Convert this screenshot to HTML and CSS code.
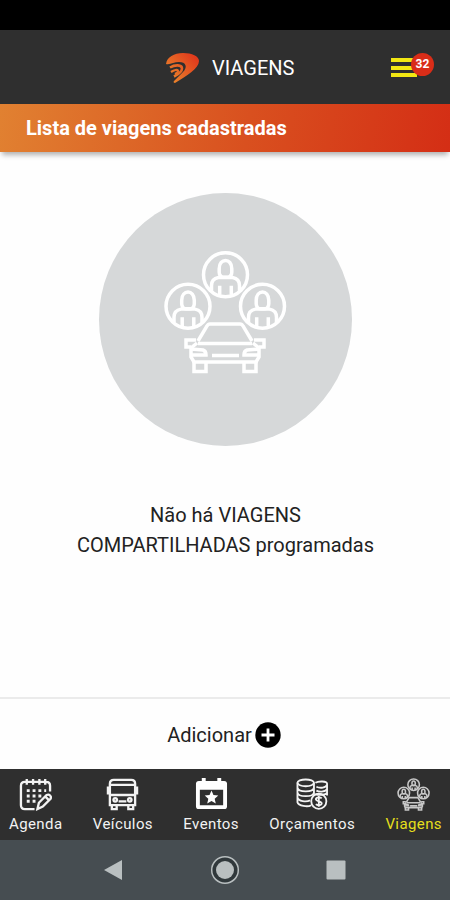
FILE: index.html
```html
<!DOCTYPE html>
<html lang="pt-BR">
	<head>
		<meta charset="utf-8" />
		<title>Viagens</title>
		<link rel="stylesheet" href="styles.css">
	</head>

	<body>
		<svg width="0" height="0" class="defs">
			<defs>
				<linearGradient id="logo-color" gradientUnits="userSpaceOnUse" x1="2" y1="28" x2="32" y2="2">
					<stop offset="0" stop-color="#ea8a2c" />
					<stop offset="1" stop-color="#e0331b" />
				</linearGradient>
				<g id="person">
					<circle r="22" />
					<path d="M-6.3 -6c0-11 12.600-11 12.600 0v3.500c0 2.500-1.800 5-4 5h-4.600c-2.200 0-4-2.500-4-5z" />
					<path d="M-14 16V11c0-5 3-7.500 7-8.200h14c4 .7 7 3.200 7 8.200v5M-5.800 11v9M5.800 11v9" />
				</g>
				<g id="carpool">
					<use href="#person" x="70.500" y="29.700" />
					<use href="#person" x="33" y="61.300" />
					<use href="#person" x="107.500" y="61.300" />
					<path d="M43 96l9-15q1-2 3-2h30q2 0 3 2l9 15" />
					<path d="M43 98.500h54M42 98l-6 5v9l3 5h62l3-5v-9l-6-5" />
					<path d="M41 95H31v7h5M99 95h10v7h-5M36 104l12 1q3 1 3 5H37M104 104l-12 1q-3 1-3 5h14" />
					<path d="M57 110.500h27M39 117v9.500h12V118M101 117v9.500H89V118" />
				</g>
			</defs>
		</svg>

		<div class="status"></div>

		<header class="header">
			<svg class="logo" viewBox="0 0 36 32">
				<path fill="url(#logo-color)" d="M1 12C2 5 9 1 18 1c9 0 16 3 16 8 0 7-12 15-24 22-1 0-2-1-1-2l9-9c5-5 3-10-4-10-5 0-9 3-13 2z" />
				<path fill="none" stroke="url(#logo-color)" stroke-width="2.600" d="M5 15.500c5-3 12-3 12 1 0 3-4 6-8 8" />
				<path fill="none" stroke="url(#logo-color)" stroke-width="2.200" d="M6 20c3-2 7-3 7-1 0 1.500-1 2-3 3" />
			</svg>
			<h1>VIAGENS</h1>
			<div class="menu">
				<i></i>
				<i></i>
				<i></i>
				<span class="badge">32</span>
			</div>
		</header>

		<div class="banner">Lista de viagens cadastradas</div>

		<main class="content">
			<div class="circle">
				<svg class="carpool" viewBox="0 0 140 135"><use href="#carpool" /></svg>
			</div>
			<p>Não há VIAGENS<br>COMPARTILHADAS programadas</p>
		</main>

		<div class="add">
			<span>Adicionar</span>
			<svg viewBox="0 0 26 26">
				<circle cx="13" cy="13" r="12.700" />
				<path d="M13 6.500v13M6.500 13h13" stroke="#fff" stroke-width="2.800" />
			</svg>
		</div>

		<nav class="tabs">
			<a class="agenda">
				<svg viewBox="0 0 34 34">
					<path d="M16 32H6q-4 0-4-4V8q0-4 4-4h22q4 0 4 4v6M8 1v6M14.500 1v6M21 1v6M27 1v6" />
					<path class="dots" d="M8 13h20M8 18.500h17M8 24h12" />
					<path d="M19 32l1.500-6.500 8-8q2-1 3.500.5t.5 3.500l-8 8zM27 19l4 4" />
				</svg>
				<span>Agenda</span>
			</a>
			<a class="veiculos">
				<svg viewBox="0 0 34 34">
					<path d="M4 28V6q0-4 4-4h18q4 0 4 4v22zM4 7h26M4 17.500h26M4 10H2v7M30 10h2v7M6 28v4h5v-4M23 28v4h5v-4M13 24h8" />
					<circle cx="9.500" cy="22.500" r="1.800" />
					<circle cx="24.500" cy="22.500" r="1.800" />
				</svg>
				<span>Veículos</span>
			</a>
			<a class="eventos">
				<svg viewBox="0 0 34 34">
					<path class="fill" fill-rule="evenodd" d="M4 3h3V0h4v3h12V0h4v3h3q3 0 3 3v23q0 3-3 3H4q-3 0-3-3V6q0-3 3-3zM5 12v16h24V12z" />
					<path class="fill" d="M17 13l2 4.600 5 .5-3.700 3.300 1.100 4.900-4.400-2.600-4.400 2.600 1.100-4.900L10 18.100l5-.5z" />
				</svg>
				<span>Eventos</span>
			</a>
			<a class="orcamentos">
				<svg viewBox="0 0 34 34">
					<ellipse cx="10" cy="5" rx="8.500" ry="3.500" />
					<path d="M1.500 5v20c1 4 11 5 14 3M18.500 5v12M1.500 10c1 5 16 5 17 0M1.500 15c1 5 16 5 17 0M1.500 20c1 4 9 5 13 3" />
					<path d="M20 5c3-2 12-2 12 1v12M21 9c4 2 10 1 11-2M21 13c4 2 10 1 11-2M21 17c4 1 10 0 11-2" />
					<circle cx="23.500" cy="24" r="7.800" />
					<path d="M26.500 21c-2-2-6-1-6 1s6 2 6 4-4 3-6 1M23.500 18.500v11" />
				</svg>
				<span>Orçamentos</span>
			</a>
			<a class="viagens active">
				<svg viewBox="7 4 126 126"><use href="#carpool" /></svg>
				<span>Viagens</span>
			</a>
		</nav>

		<div class="android">
			<svg viewBox="0 0 30 30"><path d="M5 15L23 5v20z" /></svg>
			<svg viewBox="0 0 30 30">
				<circle class="ring" cx="15" cy="15" r="13.300" />
				<circle cx="15" cy="15" r="9" />
			</svg>
			<svg viewBox="0 0 30 30"><rect x="5.500" y="5.500" width="19" height="19" rx="1" /></svg>
		</div>
	</body>

</html>
```
FILE: styles.css
```css
body,
h1,
p {
	margin: 0;
	padding: 0;
}

body {
	display: flex;
	flex-direction: column;
	height: 900px;
	overflow: hidden;
	background: #fefefe;
	color: #222;
	font-family: Roboto, "Liberation Sans", sans-serif;
}

svg {
	display: block;
}

.defs {
	position: absolute;
}

.status {
	height: 30px;
	background: #000;
}

.header {
	display: flex;
	align-items: center;
	height: 74px;
	padding: 1px 16px 0 165px;
	box-sizing: border-box;
	background: #2f2f2f;
}

.logo {
	width: 36px;
	height: 32px;
}

h1 {
	margin-left: 11px;
	font-size: 20px;
	font-weight: 400;
	color: #fff;
}

.menu {
	position: relative;
	width: 43px;
	margin-left: auto;
}

.menu i {
	display: block;
	width: 26px;
	height: 4px;
	margin: 3.5px 0;
	background: #f2e713;
}

.badge {
	position: absolute;
	top: -2px;
	right: 0;
	width: 23px;
	height: 23px;
	line-height: 23px;
	border-radius: 50%;
	background: #d92d18;
	color: #fff;
	font-size: 12px;
	font-weight: 700;
	text-align: center;
}

.banner {
	height: 48px;
	padding-left: 26px;
	line-height: 48px;
	background: linear-gradient(100deg, #e18131, #d9501f 55%, #d42e15);
	box-shadow: 0 5px 5px -2px rgba(0, 0, 0, 0.3);
	color: #fff;
	font-size: 20px;
	font-weight: 700;
}

.content {
	flex: 1;
	display: flex;
	flex-direction: column;
	align-items: center;
	padding-top: 41px;
}

.circle {
	display: flex;
	justify-content: center;
	width: 253px;
	height: 253px;
	padding-top: 52px;
	box-sizing: border-box;
	border-radius: 50%;
	background: #d6d8d9;
}

.carpool {
	width: 140px;
	height: 135px;
	fill: none;
	stroke: #fff;
	stroke-width: 3.5;
}

.content p {
	margin-top: 54px;
	padding-left: 1px;
	font-size: 20px;
	line-height: 30px;
	text-align: center;
	white-space: nowrap;
}

.add {
	display: flex;
	align-items: center;
	justify-content: center;
	gap: 3px;
	height: 72px;
	padding: 2px 2px 0 0;
	box-sizing: border-box;
	border-top: 2px solid #ebebeb;
	font-size: 20px;
}

.add svg {
	width: 26px;
	height: 26px;
}

.tabs {
	display: flex;
	justify-content: space-between;
	height: 71px;
	padding: 9px 8px 0 9px;
	box-sizing: border-box;
	background: #2f2f2f;
	color: #f3f3f3;
	font-size: 15px;
	letter-spacing: 0.4px;
}

.tabs a {
	display: flex;
	flex-direction: column;
	align-items: center;
}

.tabs svg {
	width: 33px;
	height: 33px;
	margin-bottom: 4px;
	fill: none;
	stroke: #f3f3f3;
	stroke-width: 2.4;
}

.tabs .dots {
	stroke-width: 3;
	stroke-dasharray: 3 3;
}

.tabs .fill {
	fill: #fff;
	stroke: none;
}

.tabs .orcamentos svg {
	stroke-width: 1.9;
}

.tabs .viagens svg {
	stroke: #c8c8c8;
	stroke-width: 6;
}

.active {
	color: #e5df1c;
}

.android {
	display: flex;
	justify-content: center;
	gap: 81px;
	height: 60px;
	padding-top: 15px;
	box-sizing: border-box;
	background: #464d51;
}

.android svg {
	width: 30px;
	height: 30px;
	fill: #b9bfc0;
}

.android .ring {
	fill: #30383b;
	stroke: #b9bfc0;
	stroke-width: 1.5;
}
```
